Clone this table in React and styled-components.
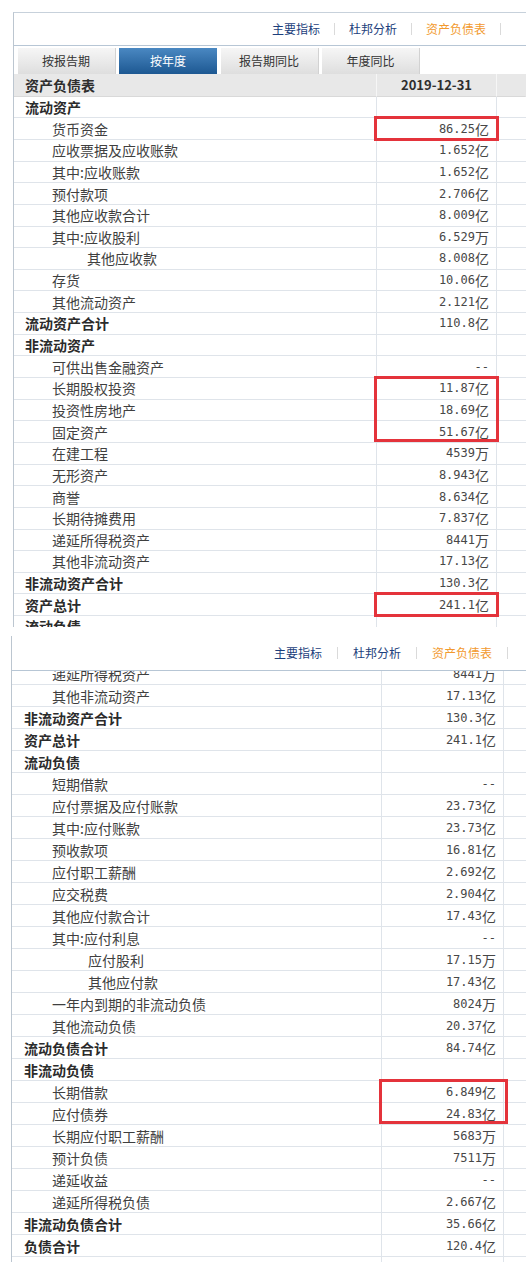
import React from 'react';
import styled, { createGlobalStyle, css } from 'styled-components';

const Global = createGlobalStyle`
  html, body { margin: 0; padding: 0; background: #fff; }
  body {
    width: 526px; height: 1270px; overflow: hidden;
    font-family: "Noto Sans CJK SC", "Noto Sans", sans-serif;
    color: #333;
  }
`;

const Page = styled.div`
  width: 526px;
  height: 1270px;
  box-sizing: border-box;
  padding-top: 12px;
  overflow: hidden;
  display: flex;
  flex-direction: column;
`;

const Panel = styled.section`
  --label-w: ${p => p.$cfg.labelW}px;
  --value-w: ${p => p.$cfg.valueW}px;
  --row-h: ${p => p.$cfg.rowH}px;
  flex: none;
  margin-left: ${p => p.$cfg.left}px;
  margin-top: ${p => p.$cfg.gap}px;
  height: ${p => p.$cfg.height}px;
  box-sizing: border-box;
  border-left: 1px solid #bcc6d0;
  border-top: ${p => (p.$cfg.topBorder ? '1px solid #c7d1db' : 'none')};
  overflow: hidden;
  display: flex;
  flex-direction: column;
`;

const Nav = styled.nav`
  flex: none;
  height: ${p => p.$h}px;
  display: flex;
  align-items: center;
  justify-content: flex-end;
  padding-right: ${p => p.$pr}px;
  border-bottom: 1px solid #b7c6d5;
`;

const NavLink = styled.a`
  font-size: 12px;
  line-height: 14px;
  padding: 0 ${p => p.$pad}px;
  color: ${p => (p.$active ? '#f29a2e' : '#1d3f7c')};
  text-decoration: none;
  white-space: nowrap;
`;

const NavSep = styled.span`
  width: 1px;
  height: 12px;
  background: #dadada;
`;

const Tabs = styled.div`
  flex: none;
  display: flex;
  gap: 3.5px;
  margin-top: 2px;
  padding-left: 3.5px;
  height: 26px;
`;

const Tab = styled.div`
  width: 98px;
  height: 26px;
  font-size: 12px;
  line-height: 26px;
  text-align: center;
  box-sizing: border-box;
  ${p =>
    p.$active
      ? css`
          color: #fff;
          background: linear-gradient(#4a88c2, #1d5892);
        `
      : css`
          color: #333;
          background: linear-gradient(#f6f6f6, #dedede);
          border-right: 1px solid #d2d2d2;
        `}
`;

const Viewport = styled.div`
  flex: 1;
  overflow: hidden;
`;

const Rows = styled.div`
  margin-top: ${p => p.$offset}px;
`;

const Row = styled.div`
  display: grid;
  grid-template-columns: var(--label-w) var(--value-w) 1fr;
  height: ${p => (p.$head ? '22.7px' : 'var(--row-h)')};
`;

const Cell = styled.div`
  box-sizing: border-box;
  border-bottom: 1px solid #dfe4ea;
  border-right: 1px solid #dfe4ea;
  white-space: nowrap;
  display: flex;
  align-items: center;
`;

const HeadCell = styled(Cell)`
  background: #e8e8e8;
  border-bottom-color: #d9d9d9;
  border-right-color: ${p => (p.$last ? 'transparent' : '#f6f6f6')};
  font-weight: 700;
  color: #2e2e2e;
  font-size: ${p => (p.$date ? '13px' : '14px')};
  justify-content: ${p => (p.$date ? 'center' : 'flex-start')};
  padding-left: ${p => (p.$date ? 0 : 11)}px;
`;

const LabelCell = styled(Cell)`
  padding-left: ${p => p.$indent}px;
  font-size: 14px;
  font-weight: ${p => (p.$bold ? 700 : 400)};
  color: ${p => (p.$bold ? '#2b2b2b' : '#3f3f3f')};
`;

const boxEdges = {
  single: { top: '-2px', bottom: '-2px', bt: true, bb: true },
  top: { top: '-2px', bottom: '-1px', bt: true, bb: false },
  mid: { top: '-1px', bottom: '-1px', bt: false, bb: false },
  bottom: { top: '-1px', bottom: '0px', bt: false, bb: true },
};

const ValueCell = styled(Cell)`
  position: relative;
  justify-content: flex-end;
  padding-right: 7px;
  color: #444;
  ${p =>
    p.$mark &&
    css`
      &::after {
        content: '';
        position: absolute;
        z-index: 1;
        left: -3px;
        right: ${p.$boxRight}px;
        top: ${boxEdges[p.$mark].top};
        bottom: ${boxEdges[p.$mark].bottom};
        border-left: 3px solid #e4333b;
        border-right: 3px solid #e4333b;
        border-top: ${boxEdges[p.$mark].bt ? '3px solid #e4333b' : 'none'};
        border-bottom: ${boxEdges[p.$mark].bb ? '3px solid #e4333b' : 'none'};
      }
    `}
`;

const RestCell = styled(Cell)`
  border-right: none;
`;

const Num = styled.span`
  font-family: "DejaVu Sans Mono", "Liberation Mono", monospace;
  font-size: 12px;
  color: #474747;
`;

const Unit = styled.span`
  font-family: "Noto Sans CJK SC", sans-serif;
  font-size: 14px;
  color: #474747;
`;

function Value({ v }) {
  if (!v) return null;
  const m = v.match(/^([-0-9.]+)(.*)$/);
  if (!m) return <Num>{v}</Num>;
  return (
    <>
      <Num>{m[1]}</Num>
      {m[2] && <Unit>{m[2]}</Unit>}
    </>
  );
}

const topRows = [
  { l: '流动资产', b: 1 },
  { l: '货币资金', i: 1, v: '86.25亿', mark: 'single' },
  { l: '应收票据及应收账款', i: 1, v: '1.652亿' },
  { l: '其中:应收账款', i: 1, v: '1.652亿' },
  { l: '预付款项', i: 1, v: '2.706亿' },
  { l: '其他应收款合计', i: 1, v: '8.009亿' },
  { l: '其中:应收股利', i: 1, v: '6.529万' },
  { l: '其他应收款', i: 2, v: '8.008亿' },
  { l: '存货', i: 1, v: '10.06亿' },
  { l: '其他流动资产', i: 1, v: '2.121亿' },
  { l: '流动资产合计', b: 1, v: '110.8亿' },
  { l: '非流动资产', b: 1 },
  { l: '可供出售金融资产', i: 1, v: '--' },
  { l: '长期股权投资', i: 1, v: '11.87亿', mark: 'top' },
  { l: '投资性房地产', i: 1, v: '18.69亿', mark: 'mid' },
  { l: '固定资产', i: 1, v: '51.67亿', mark: 'bottom' },
  { l: '在建工程', i: 1, v: '4539万' },
  { l: '无形资产', i: 1, v: '8.943亿' },
  { l: '商誉', i: 1, v: '8.634亿' },
  { l: '长期待摊费用', i: 1, v: '7.837亿' },
  { l: '递延所得税资产', i: 1, v: '8441万' },
  { l: '其他非流动资产', i: 1, v: '17.13亿' },
  { l: '非流动资产合计', b: 1, v: '130.3亿' },
  { l: '资产总计', b: 1, v: '241.1亿', mark: 'single' },
  { l: '流动负债', b: 1 },
];

const bottomRows = [
  { l: '递延所得税资产', i: 1, v: '8441万' },
  { l: '其他非流动资产', i: 1, v: '17.13亿' },
  { l: '非流动资产合计', b: 1, v: '130.3亿' },
  { l: '资产总计', b: 1, v: '241.1亿' },
  { l: '流动负债', b: 1 },
  { l: '短期借款', i: 1, v: '--' },
  { l: '应付票据及应付账款', i: 1, v: '23.73亿' },
  { l: '其中:应付账款', i: 1, v: '23.73亿' },
  { l: '预收款项', i: 1, v: '16.81亿' },
  { l: '应付职工薪酬', i: 1, v: '2.692亿' },
  { l: '应交税费', i: 1, v: '2.904亿' },
  { l: '其他应付款合计', i: 1, v: '17.43亿' },
  { l: '其中:应付利息', i: 1, v: '--' },
  { l: '应付股利', i: 2, v: '17.15万' },
  { l: '其他应付款', i: 2, v: '17.43亿' },
  { l: '一年内到期的非流动负债', i: 1, v: '8024万' },
  { l: '其他流动负债', i: 1, v: '20.37亿' },
  { l: '流动负债合计', b: 1, v: '84.74亿' },
  { l: '非流动负债', b: 1 },
  { l: '长期借款', i: 1, v: '6.849亿', mark: 'top' },
  { l: '应付债券', i: 1, v: '24.83亿', mark: 'bottom' },
  { l: '长期应付职工薪酬', i: 1, v: '5683万' },
  { l: '预计负债', i: 1, v: '7511万' },
  { l: '递延收益', i: 1, v: '--' },
  { l: '递延所得税负债', i: 1, v: '2.667亿' },
  { l: '非流动负债合计', b: 1, v: '35.66亿' },
  { l: '负债合计', b: 1, v: '120.4亿' },
  { l: '' },
];

const topCfg = {
  left: 13, gap: 0, height: 615, topBorder: true,
  navH: 32, navPr: 25, navPad: 14,
  labelW: 363, valueW: 120, rowH: 21.65,
  indents: [11, 38, 73], offset: 0, boxRight: -3,
};

const bottomCfg = {
  left: 11, gap: 9, height: 626, topBorder: false,
  navH: 34, navPr: 18, navPad: 15,
  labelW: 370, valueW: 122, rowH: 22,
  indents: [12, 40, 76], offset: -8, boxRight: -5,
};

const navItems = ['主要指标', '杜邦分析', '资产负债表'];
const tabItems = ['按报告期', '按年度', '报告期同比', '年度同比'];

function TopNav({ cfg }) {
  return (
    <Nav $h={cfg.navH} $pr={cfg.navPr}>
      {navItems.map((t, i) => (
        <React.Fragment key={t}>
          <NavLink $pad={cfg.navPad} $active={i === 2}>{t}</NavLink>
          <NavSep />
        </React.Fragment>
      ))}
    </Nav>
  );
}

function DataRows({ rows, cfg }) {
  return rows.map((r, idx) => (
    <Row key={idx}>
      <LabelCell $bold={!!r.b} $indent={cfg.indents[r.b ? 0 : r.i || 0]}>{r.l}</LabelCell>
      <ValueCell $mark={r.mark} $boxRight={cfg.boxRight}>
        <Value v={r.v} />
      </ValueCell>
      <RestCell />
    </Row>
  ));
}

export default function App() {
  return (
    <>
      <Global />
      <Page>
        <Panel $cfg={topCfg}>
          <TopNav cfg={topCfg} />
          <Tabs>
            {tabItems.map((t, i) => (
              <Tab key={t} $active={i === 1}>{t}</Tab>
            ))}
          </Tabs>
          <Viewport>
            <Rows $offset={topCfg.offset}>
              <Row $head>
                <HeadCell>资产负债表</HeadCell>
                <HeadCell $date>2019-12-31</HeadCell>
                <HeadCell $last />
              </Row>
              <DataRows rows={topRows} cfg={topCfg} />
            </Rows>
          </Viewport>
        </Panel>
        <Panel $cfg={bottomCfg}>
          <TopNav cfg={bottomCfg} />
          <Viewport>
            <Rows $offset={bottomCfg.offset}>
              <DataRows rows={bottomRows} cfg={bottomCfg} />
            </Rows>
          </Viewport>
        </Panel>
      </Page>
    </>
  );
}
